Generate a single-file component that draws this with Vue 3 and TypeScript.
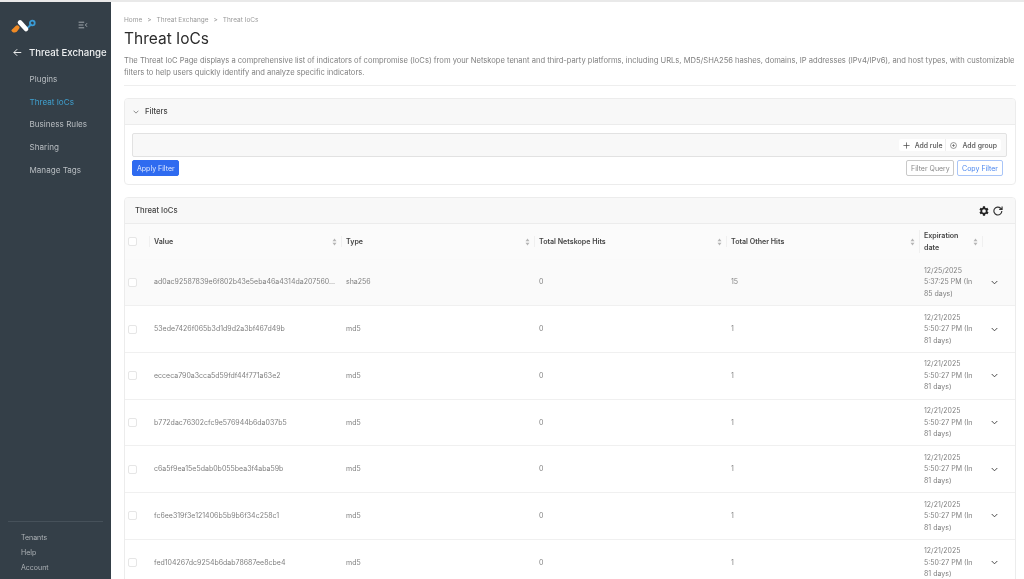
<template>
  <div class="app">
    <aside class="sidebar">
      <div class="sidebar__top">
        <svg class="logo" viewBox="0 0 26 14" fill="none">
          <path d="M15.500 10 20 5.500" stroke="#3a9bd5" stroke-width="1.800" stroke-linecap="round" />
          <circle cx="21.300" cy="4" r="2.400" stroke="#3a9bd5" stroke-width="1.800" />
          <path d="M0.300 11.200 4.600 6.900A2.300 2.300 0 0 1 7.900 10.100L5.800 12.800C3.800 14.200 1 13.600 0.300 11.200Z" fill="#f08a24" />
          <path d="M9 3.400 15 10" stroke="#fff" stroke-width="4.600" stroke-linecap="round" />
        </svg>
        <svg class="collapse" viewBox="0 0 12 10" fill="none" stroke="#c9ced2" stroke-width="0.900">
          <path d="M0.500 1.500h7M0.500 5h6M0.500 8.500h7M11 2.800 9 5l2 2.200" />
        </svg>
      </div>
      <div class="sidebar__title">
        <svg class="back" viewBox="0 0 12 12" fill="none" stroke="#fff" stroke-width="1.200">
          <path d="M11 6H1.200M5.600 1.600 1.200 6l4.400 4.400" />
        </svg>
        <span>Threat Exchange</span>
      </div>
      <nav class="nav">
        <a v-for="item in navItems" :key="item" class="nav__item" :class="{ 'nav__item--active': item === 'Threat IoCs' }">{{ item }}</a>
      </nav>
      <div class="sidebar__bottom">
        <a v-for="item in bottomItems" :key="item">{{ item }}</a>
      </div>
    </aside>

    <main class="main">
      <div class="crumbs">
        <span>Home</span><span>&gt;</span><span>Threat Exchange</span><span>&gt;</span><span>Threat IoCs</span>
      </div>
      <h1>Threat IoCs</h1>
      <p class="intro">
        The Threat IoC Page displays a comprehensive list of indicators of compromise (IoCs) from your Netskope tenant and third-party platforms, including URLs, MD5/SHA256 hashes, domains, IP addresses (IPv4/IPv6), and host types, with customizable filters to help users quickly identify and analyze specific indicators.
      </p>

      <section class="card filters">
        <header class="card__head">
          <svg class="filters__chev" viewBox="0 0 8 5" fill="none" stroke="#444" stroke-width="0.800"><path d="M.8.8 4 4 7.200.8" /></svg>
          <span>Filters</span>
        </header>
        <div class="filters__body">
          <div class="builder">
            <div class="builder__btns">
              <button class="builder__btn">
                <svg viewBox="0 0 8 8" fill="none" stroke="#444" stroke-width="0.800"><path d="M4 .5v7M.5 4h7" /></svg>
                Add rule
              </button>
              <button class="builder__btn">
                <svg viewBox="0 0 8 8" fill="none" stroke="#444" stroke-width="0.600"><circle cx="4" cy="4" r="3.400" /><path d="M4 2.200v3.600M2.200 4h3.600" /></svg>
                Add group
              </button>
            </div>
          </div>
          <div class="filters__actions">
            <button class="btn btn--primary">Apply Filter</button>
            <div class="filters__right">
              <button class="btn btn--grey">Filter Query</button>
              <button class="btn btn--blue">Copy Filter</button>
            </div>
          </div>
        </div>
      </section>

      <section class="card results">
        <header class="card__head results__head">
          <span>Threat IoCs</span>
          <div class="results__tools">
            <svg viewBox="3 2.500 18 19" fill="#222"><path d="M19.400 13a7.600 7.600 0 0 0 0-2l2.100-1.600-2-3.500-2.500 1a7.600 7.600 0 0 0-1.700-1L15 3.200h-4l-.4 2.700a7.600 7.600 0 0 0-1.700 1l-2.500-1-2 3.500L6.500 11a7.600 7.600 0 0 0 0 2l-2.100 1.600 2 3.500 2.500-1a7.600 7.600 0 0 0 1.700 1l.4 2.700h4l.4-2.700a7.600 7.600 0 0 0 1.700-1l2.500 1 2-3.500ZM13 15.500a3.500 3.500 0 1 1 0-7 3.500 3.500 0 0 1 0 7Z" transform="translate(-1 0)" /></svg>
            <svg viewBox="3 2.500 18.500 19" fill="none" stroke="#333" stroke-width="2.200"><path d="M19.500 12a7.500 7.500 0 1 1-2.300-5.400L20 9M20 3.500V9h-5.500" /></svg>
          </div>
        </header>
        <table class="grid">
          <colgroup>
            <col style="width: 24px" />
            <col style="width: 192px" />
            <col style="width: 193px" />
            <col style="width: 192px" />
            <col style="width: 193px" />
            <col style="width: 63px" />
            <col />
          </colgroup>
          <thead>
            <tr>
              <th class="cell-check"><span class="check"></span></th>
              <th v-for="col in columns" :key="col">
                <div class="th">
                  <span>{{ col }}</span>
                  <svg class="sort" viewBox="0 0 6 10" fill="#b5b5b5"><path d="M3 .5 5.500 4H.5ZM3 9.500.5 6h5Z" /></svg>
                </div>
              </th>
              <th><div class="th th--empty"></div></th>
            </tr>
          </thead>
          <tbody>
            <tr v-for="(row, i) in rows" :key="row.value" :class="{ 'row--hover': i === 0 }">
              <td class="cell-check"><span class="check"></span></td>
              <td class="value">{{ row.value }}</td>
              <td>{{ row.type }}</td>
              <td>0</td>
              <td>{{ row.other }}</td>
              <td>{{ row.expiry }}</td>
              <td class="cell-expand">
                <svg viewBox="0 0 8 5" fill="none" stroke="#333" stroke-width="1"><path d="M.8.8 4 4 7.200.8" /></svg>
              </td>
            </tr>
          </tbody>
        </table>
      </section>
    </main>
  </div>
</template>

<script setup lang="ts">
interface IocRow {
  value: string;
  type: string;
  other: number;
  expiry: string;
}

const navItems = ["Plugins", "Threat IoCs", "Business Rules", "Sharing", "Manage Tags"];
const bottomItems = ["Tenants", "Help", "Account"];
const columns = ["Value", "Type", "Total Netskope Hits", "Total Other Hits", "Expiration date"];

const oldExpiry = "12/21/2025 5:50:27 PM (In 81 days)";

const rows: IocRow[] = [
  { value: "ad0ac92587839e6f802b43e5eba46a4314da207560...", type: "sha256", other: 15, expiry: "12/25/2025 5:37:25 PM (In 85 days)" },
  { value: "53ede7426f065b3d1d9d2a3bf467d49b", type: "md5", other: 1, expiry: oldExpiry },
  { value: "ecceca790a3cca5d59fdf44f771a63e2", type: "md5", other: 1, expiry: oldExpiry },
  { value: "b772dac76302cfc9e576944b6da037b5", type: "md5", other: 1, expiry: oldExpiry },
  { value: "c6a5f9ea15e5dab0b055bea3f4aba59b", type: "md5", other: 1, expiry: oldExpiry },
  { value: "fc6ee319f3e121406b5b9b6f34c258c1", type: "md5", other: 1, expiry: oldExpiry },
  { value: "fed104267dc9254b6dab78687ee8cbe4", type: "md5", other: 1, expiry: oldExpiry },
];
</script>

<style>
html,
body {
  margin: 0;
  height: 100%;
  overflow: hidden;
  background: #fff;
}
</style>

<style scoped>
.app {
  display: flex;
  height: 579px;
  overflow: hidden;
  border-top: 2px solid #e9e9e9;
  box-sizing: border-box;
  font-family: Inter, "Liberation Sans", sans-serif;
  color: #333;
  will-change: transform;
}

.sidebar {
  width: 111px;
  flex-shrink: 0;
  display: flex;
  flex-direction: column;
  background: #343f48;
  color: #c4c8cc;
}

.sidebar__top {
  display: flex;
  align-items: center;
  justify-content: space-between;
  padding: 17px 23px 0 11px;
  height: 14px;
}

.logo {
  width: 26px;
  height: 14px;
}

.collapse {
  width: 10px;
  height: 8px;
  margin-top: -3px;
}

.sidebar__title {
  display: flex;
  align-items: center;
  gap: 7px;
  margin-top: 14px;
  padding-left: 13px;
  font-size: 9.600px;
  font-weight: 500;
  color: #eef0f1;
  white-space: nowrap;
}

.back {
  width: 9px;
  height: 9px;
  flex-shrink: 0;
}

.nav {
  display: flex;
  flex-direction: column;
  margin-top: 10px;
}

.nav__item {
  height: 22.700px;
  line-height: 22.700px;
  padding-left: 29.500px;
  font-size: 8.100px;
  color: #b9bec2;
}

.nav__item--active {
  color: #3fa0cf;
}

.sidebar__bottom {
  margin: auto 8px 0;
  padding: 8px 0 4px 13px;
  border-top: 1px solid #46515a;
  display: flex;
  flex-direction: column;
  font-size: 7px;
  line-height: 15px;
  color: #aeb3b7;
}

.main {
  flex: 1;
  min-width: 0;
  padding: 13px 8px 0 13px;
}

.crumbs {
  display: flex;
  gap: 5px;
  font-size: 6.500px;
  line-height: 10px;
  color: #999;
}

h1 {
  margin: 4px 0 0;
  font-size: 15.500px;
  font-weight: 400;
  line-height: 20px;
  color: #2c2c2c;
}

.intro {
  margin: 6px 0 0;
  padding-bottom: 6px;
  border-bottom: 1px solid #eee;
  font-size: 7.580px;
  line-height: 12px;
  color: #808080;
}

.card {
  border: 1px solid #ececec;
  border-radius: 4px;
  background: #fff;
}

.card__head {
  display: flex;
  align-items: center;
  height: 25px;
  background: #f8f8f8;
  border-bottom: 1px solid #ececec;
  border-radius: 4px 4px 0 0;
  font-size: 7.700px;
  font-weight: 500;
  color: #444;
}

.filters {
  margin-top: 12px;
}

.filters .card__head {
  padding-left: 8px;
  gap: 6px;
}

.filters__chev {
  width: 6px;
  height: 4px;
}

.filters__body {
  padding: 8px 8px 8px 7px;
}

.builder {
  display: flex;
  align-items: center;
  justify-content: flex-end;
  height: 22px;
  padding-right: 5px;
  background: #f8f8f8;
  border: 1px solid #e2e2e2;
  border-radius: 2px;
}

.builder__btns {
  display: flex;
  height: 12px;
  background: #fff;
  border-radius: 2px;
}

.builder__btn {
  display: flex;
  align-items: center;
  gap: 5px;
  padding: 0 4px;
  border: none;
  border-left: 1px solid #eee;
  background: none;
  font: 500 6.900px Inter, "Liberation Sans", sans-serif;
  color: #555;
  white-space: nowrap;
}

.builder__btn:first-child {
  border-left: none;
  padding-right: 3px;
}

.builder__btn svg {
  width: 7px;
  height: 7px;
}

.filters__actions {
  display: flex;
  align-items: flex-start;
  justify-content: space-between;
  margin-top: 3px;
  padding-right: 4px;
}

.filters__right {
  display: flex;
  gap: 3px;
}

.btn {
  height: 16px;
  padding: 0 4px;
  border-radius: 2px;
  font: 7px Inter, "Liberation Sans", sans-serif;
  white-space: nowrap;
  background: #fff;
}

.btn--primary {
  width: 47px;
  background: #2f6bf0;
  border: 1px solid #2f6bf0;
  color: #dfe9ff;
}

.btn--grey {
  width: 48px;
  border: 1px solid #c9c9c9;
  color: #888;
}

.btn--blue {
  width: 46px;
  border: 1px solid #a9c5f8;
  color: #4a86ee;
}

.results {
  margin-top: 12px;
}

.results__head {
  justify-content: space-between;
  padding: 0 12px 0 10px;
}

.results__tools {
  display: flex;
  gap: 4px;
}

.results__tools svg {
  width: 10px;
  height: 10px;
}

.grid {
  width: 100%;
  table-layout: fixed;
  border-collapse: collapse;
  font-size: 7px;
  color: #808080;
}

thead tr {
  height: 35px;
  background: #fbfbfb;
}

th {
  padding: 0;
  text-align: left;
  font-size: 7.100px;
  font-weight: 600;
  color: #444;
}

.th {
  display: flex;
  align-items: center;
  justify-content: space-between;
  padding: 0 4px;
  border-left: 1px solid #f0f0f0;
  line-height: 11.500px;
}

th:nth-child(6) .th span {
  max-width: 40px;
}

.th--empty {
  height: 11.500px;
}

.sort {
  width: 5px;
  height: 8px;
  flex-shrink: 0;
}

tbody tr {
  height: 46.700px;
  border-bottom: 1px solid #f0f0f0;
}

.row--hover {
  background: #fafafa;
}

td {
  padding: 0 5px;
  line-height: 11.500px;
}

.value {
  white-space: nowrap;
}

.cell-check {
  padding: 0 0 0 3px;
}

.check {
  display: block;
  width: 7px;
  height: 7px;
  border: 1px solid #e6e6e6;
  border-radius: 2px;
  background: #fff;
}

.cell-expand {
  padding: 0 0 0 9px;
}

.cell-expand svg {
  display: block;
  width: 7px;
  height: 5px;
}
</style>
